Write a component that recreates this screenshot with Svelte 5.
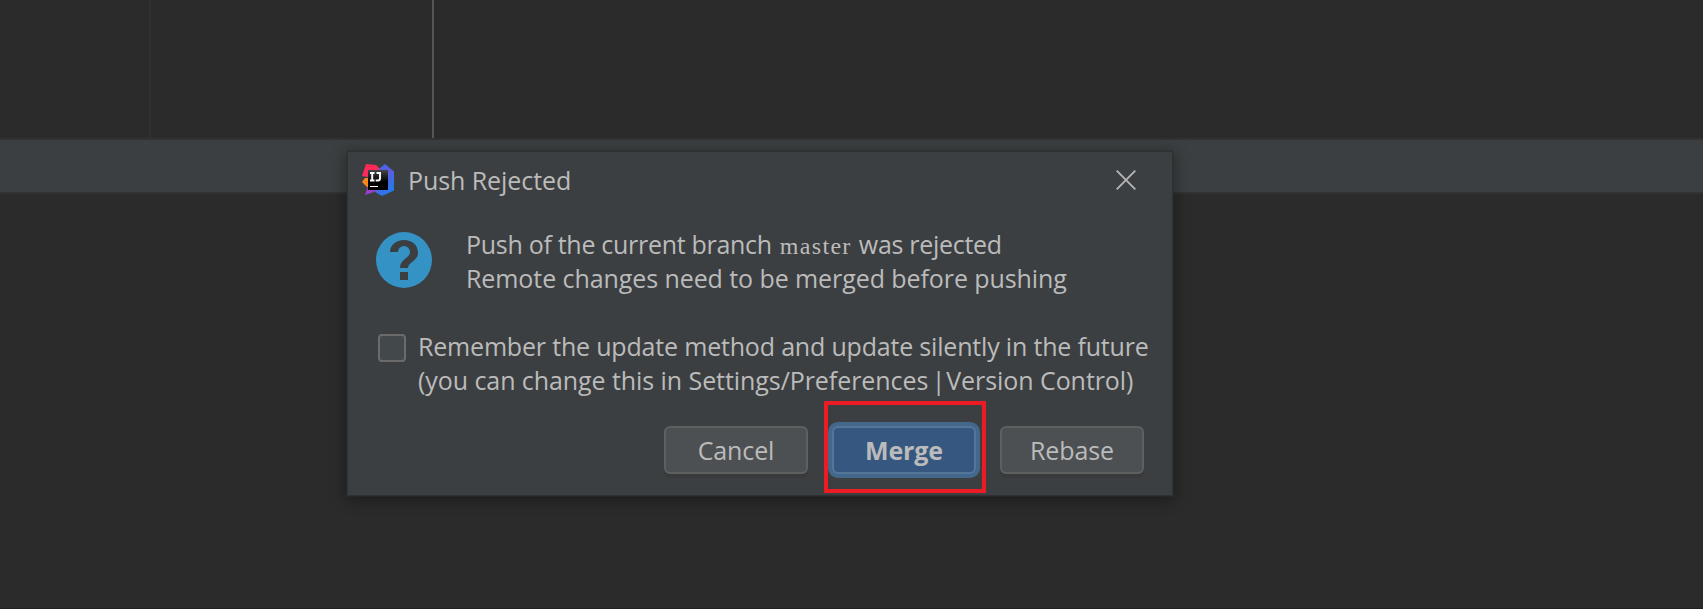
<script>
  let remember = $state(false);
</script>

<main class="ide">
  <section class="editor">
    <div class="gutter"></div>
    <div class="panel"></div>
  </section>
  <div class="toolbar"></div>

  <div class="dialog" role="dialog" aria-labelledby="title">
    <header>
      <svg class="logo" viewBox="0 0 32 32" width="32" height="32">
        <defs>
          <linearGradient id="pink" x1="0" y1="0" x2="0.2" y2="1">
            <stop offset="0" stop-color="#ff2850" />
            <stop offset="0.45" stop-color="#f82d64" />
            <stop offset="0.8" stop-color="#b23ab5" />
            <stop offset="1" stop-color="#8a43d6" />
          </linearGradient>
          <linearGradient id="blue" x1="0" y1="0" x2="0.5" y2="1">
            <stop offset="0" stop-color="#2478ee" />
            <stop offset="0.45" stop-color="#6358df" />
            <stop offset="1" stop-color="#227bea" />
          </linearGradient>
          <linearGradient id="tile" x1="0" y1="0" x2="0" y2="1">
            <stop offset="0" stop-color="#454545" />
            <stop offset="0.6" stop-color="#000" />
          </linearGradient>
        </defs>
        <path d="M4 0 14 1 21 8 19 24 12 28 3 31 6 22 6 13 0 12Z" fill="url(#pink)" />
        <path d="M0 18 3 14 8 14 8 23 5 23Z" fill="#ff861f" />
        <path d="M17 5 23 0 32 7.500 32 26.500 20 32 13 28 20 17Z" fill="url(#blue)" />
        <rect x="6" y="6" width="20" height="20" fill="url(#tile)" />
        <path d="M8 9H12.500M10.200 9V16.500M8 16.500H12.500M14.500 9H19M18 8V14.500Q18 16.500 16 16.500H13.700" fill="none" stroke="#fff" stroke-width="1.900" />
        <path d="M8 22H16V23H8Z" fill="#fff" />
      </svg>
      <h1 id="title">Push Rejected</h1>
      <svg class="close" viewBox="0 0 20 20" width="20" height="20">
        <path d="M.7.7 19.300 19.300M19.300.7.7 19.300" stroke="#b2b4b5" stroke-width="1.900" />
      </svg>
    </header>

    <div class="message">
      <svg viewBox="0 0 56 56" width="56" height="56">
        <circle cx="28" cy="28" r="28" fill="#3592c4" />
        <path d="M14 20C14 13 20 8 28 8S42 13 42 21C42 29 32 30 32 36H24C24 27 34 26 34 20A6 6 0 0 0 22 20ZM24 40H32V48H24Z" fill="#3c3f41" />
      </svg>
      <p>
        <span class="l1">Push of the current branch</span><code>master</code><span class="l1">was rejected</span><br />
        <span class="l2">Remote changes need to be merged before pushing</span>
      </p>
    </div>

    <label>
      <input type="checkbox" bind:checked={remember} />
      <p>
        <span class="l3">Remember the update method and update silently in the future</span><br />
        <span class="l4">(you can change this in Settings/Preferences<span class="pipe">{' | '}</span>Version Control)</span>
      </p>
    </label>

    <footer>
      <button class="cancel">Cancel</button>
      <button class="primary">Merge</button>
      <button class="rebase">Rebase</button>
    </footer>
    <div class="highlight"></div>
  </div>
</main>

<style>
  :global(body) { margin: 0; background: #2b2b2b; }
  .ide {
    position: relative;
    box-sizing: border-box;
    height: 609px;
    overflow: hidden;
    background: #2b2b2b;
    border-bottom: 1px solid #241f21;
    font: 25px/34px "Open Sans", "Noto Sans", sans-serif;
    color: #bbb;
  }
  .editor { display: flex; height: 138px; }
  .gutter { width: 149px; border-right: 2px solid #313131; }
  .panel { width: 281px; border-right: 2px solid #555; }
  .toolbar {
    height: 52px;
    background: #3c3f41;
    border: solid #323232;
    border-width: 2px 0;
  }
  .dialog {
    position: absolute;
    left: 348px;
    top: 152px;
    width: 824px;
    height: 343px;
    background: #3c3f41;
    box-shadow: 0 0 0 1.500px #2e3031, 0 3px 14px 2px rgba(0, 0, 0, .38);
  }
  header { display: flex; align-items: center; height: 56px; padding: 0 36px 0 14px; }
  h1 { flex: 1; margin: 0 0 1px 14px; font: inherit; letter-spacing: -.070px; white-space: nowrap; }
  .message { display: flex; gap: 34px; padding: 24px 0 0 28px; }
  p { margin: 0; white-space: nowrap; }
  .message p { margin-top: -5px; height: 69px; }
  code {
    display: inline-block;
    width: 72px;
    margin: 0 7px 0 8px;
    font: 24px/24px "Liberation Serif", serif;
    letter-spacing: 1.300px;
  }
  .l1 { letter-spacing: -.290px; }
  .l2 { letter-spacing: -.080px; }
  .l3 { letter-spacing: -.185px; }
  .l4 { letter-spacing: -.070px; }
  .pipe { letter-spacing: -2.900px; white-space: pre; }
  label { display: flex; margin: 33px 0 0 30px; }
  input {
    appearance: none;
    box-sizing: border-box;
    width: 28px;
    height: 28px;
    margin: 5px 12px 0 0;
    border: 2px solid #6b6b6b;
    border-radius: 4px;
    background: #43494a;
  }
  footer { display: flex; gap: 24px; margin: 29px 0 0 316px; }
  button {
    box-sizing: border-box;
    width: 144px;
    height: 48px;
    padding: 0;
    border: 2px solid #5e6060;
    border-radius: 6px;
    background: #4c5052;
    box-shadow: 0 4px 0 #37393a;
    color: #bbb;
    font: inherit;
    letter-spacing: -.100px;
  }
  .primary {
    border-color: #537699;
    background: #365880;
    box-shadow: 0 0 0 4px #43688c;
    font-weight: 700;
  }
  .highlight {
    position: absolute;
    left: 476px;
    top: 249px;
    box-sizing: border-box;
    width: 162px;
    height: 92px;
    border: 4px solid #ed1c24;
    border-radius: 1px;
    pointer-events: none;
  }
</style>
